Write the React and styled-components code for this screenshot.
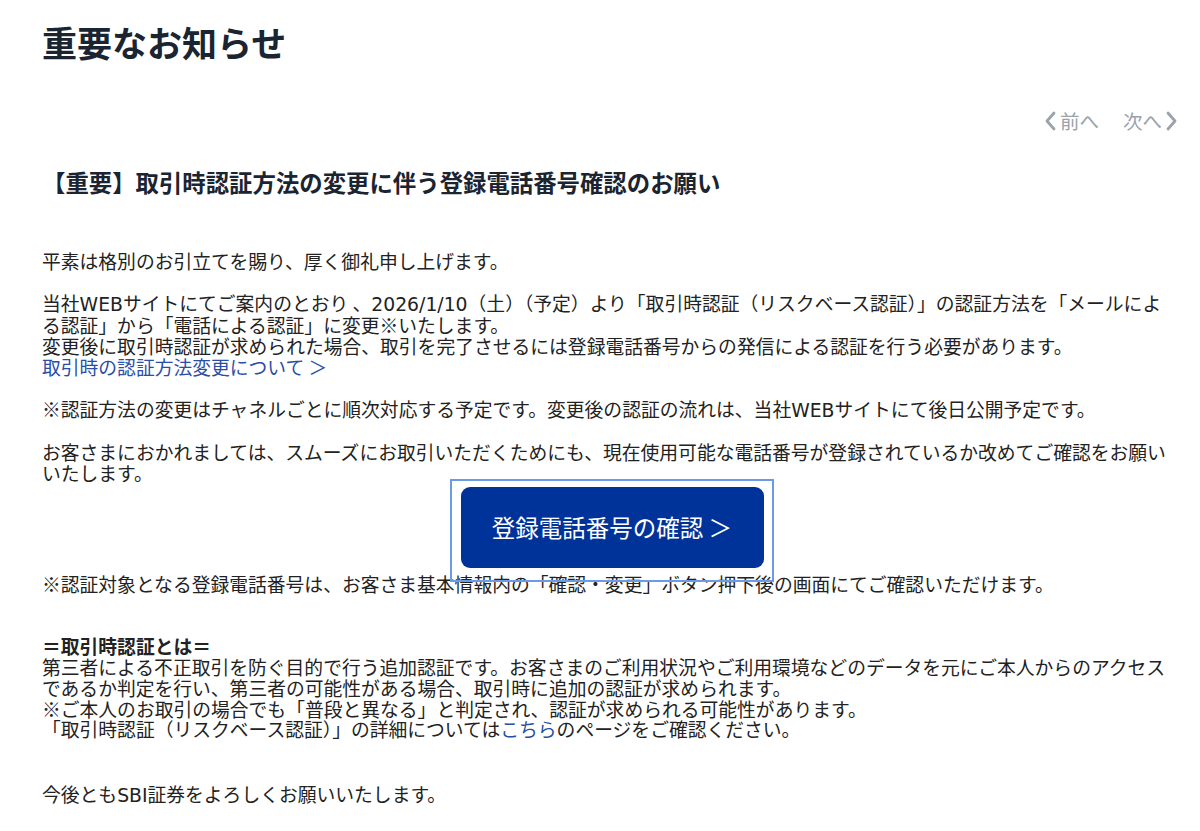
import React from 'react'
import styled, { createGlobalStyle } from 'styled-components'

const GlobalStyle = createGlobalStyle`
  body {
    margin: 0;
    background: #ffffff;
    font-family: "Noto Sans CJK JP", "Noto Sans", sans-serif;
  }
`

const Page = styled.main`
  padding: 21px 25px 40px 42px;
  color: #222;
`

const Title = styled.h1`
  margin: 0;
  font-size: 35px;
  line-height: 42px;
  font-weight: 700;
  color: #1b2431;
`

const Pager = styled.nav`
  display: flex;
  justify-content: flex-end;
  gap: 24px;
  margin: 46px -3px 0 0;
`

const PagerLink = styled.a`
  display: flex;
  align-items: center;
  gap: 4px;
  font-size: 19.5px;
  line-height: 24px;
  color: #9aa2ac;
  text-decoration: none;
  cursor: pointer;
`

const Heading = styled.h2`
  margin: 34px 0 0;
  font-size: 23.4px;
  line-height: 30px;
  font-weight: 700;
  color: #1b2431;
`

const Body = styled.div`
  margin-top: 54px;
  font-size: 18.8px;
  line-height: 20.8px;
`

const Para = styled.p`
  margin: 0 0 ${(p) => (p.$gap ?? 1) * 20.8}px;
`

/* latin runs are wider in the original font, DejaVu is close to it */
const Latin = styled.span`
  font-family: "DejaVu Sans", "Noto Sans CJK JP", sans-serif;
`

const Strong = styled.strong`
  font-weight: 700;
`

const TextLink = styled.a`
  color: #2a4ea6;
  text-decoration: none;
  cursor: pointer;
`

const ButtonRow = styled.div`
  display: flex;
  justify-content: center;
  padding: 3px 0 6px;
  margin-right: -7px;
`

const ConfirmButton = styled.a`
  position: relative;
  display: flex;
  align-items: center;
  justify-content: center;
  width: 303px;
  height: 81px;
  border-radius: 9px;
  background: #003399;
  color: #ffffff;
  font-size: 23.5px;
  text-decoration: none;
  cursor: pointer;

  &::after {
    content: "";
    position: absolute;
    top: -8px;
    left: -11px;
    right: -10px;
    bottom: -14px;
    border: 2px solid #6b9be6;
    pointer-events: none;
  }
`

const Chevron = ({ dir }) => (
  <svg width="12" height="20" viewBox="0 0 12 20" fill="none">
    <path
      d={dir === 'left' ? 'M10 2 L3 10 L10 18' : 'M2 2 L9 10 L2 18'}
      stroke="#9aa2ac"
      strokeWidth="2.8"
      strokeLinecap="round"
      strokeLinejoin="round"
    />
  </svg>
)

export default function App() {
  return (
    <>
      <GlobalStyle />
      <Page>
        <Title>重要なお知らせ</Title>
        <Pager>
          <PagerLink>
            <Chevron dir="left" />
            前へ
          </PagerLink>
          <PagerLink>
            次へ
            <Chevron dir="right" />
          </PagerLink>
        </Pager>
        <Heading>【重要】取引時認証方法の変更に伴う登録電話番号確認のお願い</Heading>
        <Body>
          <Para>平素は格別のお引立てを賜り、厚く御礼申し上げます。</Para>
          <Para>
            当社<Latin>WEB</Latin>サイトにてご案内のとおり
            、<Latin>2026/1/10</Latin>（土）（予定）より「取引時認証（リスクベース認証）」の認証方法を「メールによる認証」から「電話による認証」に変更※いたします。
            <br />
            変更後に取引時認証が求められた場合、取引を完了させるには登録電話番号からの発信による認証を行う必要があります。
            <br />
            <TextLink>取引時の認証方法変更について ＞</TextLink>
          </Para>
          <Para>
            ※認証方法の変更はチャネルごとに順次対応する予定です。変更後の認証の流れは、当社<Latin>WEB</Latin>サイトにて後日公開予定です。
          </Para>
          <Para $gap={0}>
            お客さまにおかれましては、スムーズにお取引いただくためにも、現在使用可能な電話番号が登録されているか改めてご確認をお願いいたします。
          </Para>
          <ButtonRow>
            <ConfirmButton>登録電話番号の確認 ＞</ConfirmButton>
          </ButtonRow>
          <Para $gap={2}>
            ※認証対象となる登録電話番号は、お客さま基本情報内の「確認・変更」ボタン押下後の画面にてご確認いただけます。
          </Para>
          <Para $gap={2.1}>
            <Strong>＝取引時認証とは＝</Strong>
            <br />
            第三者による不正取引を防ぐ目的で行う追加認証です。お客さまのご利用状況やご利用環境などのデータを元にご本人からのアクセスであるか判定を行い、第三者の可能性がある場合、取引時に追加の認証が求められます。
            <br />
            ※ご本人のお取引の場合でも「普段と異なる」と判定され、認証が求められる可能性があります。
            <br />
            「取引時認証（リスクベース認証）」の詳細については<TextLink>こちら</TextLink>のページをご確認ください。
          </Para>
          <Para>
            今後とも<Latin>SBI</Latin>証券をよろしくお願いいたします。
          </Para>
        </Body>
      </Page>
    </>
  )
}
